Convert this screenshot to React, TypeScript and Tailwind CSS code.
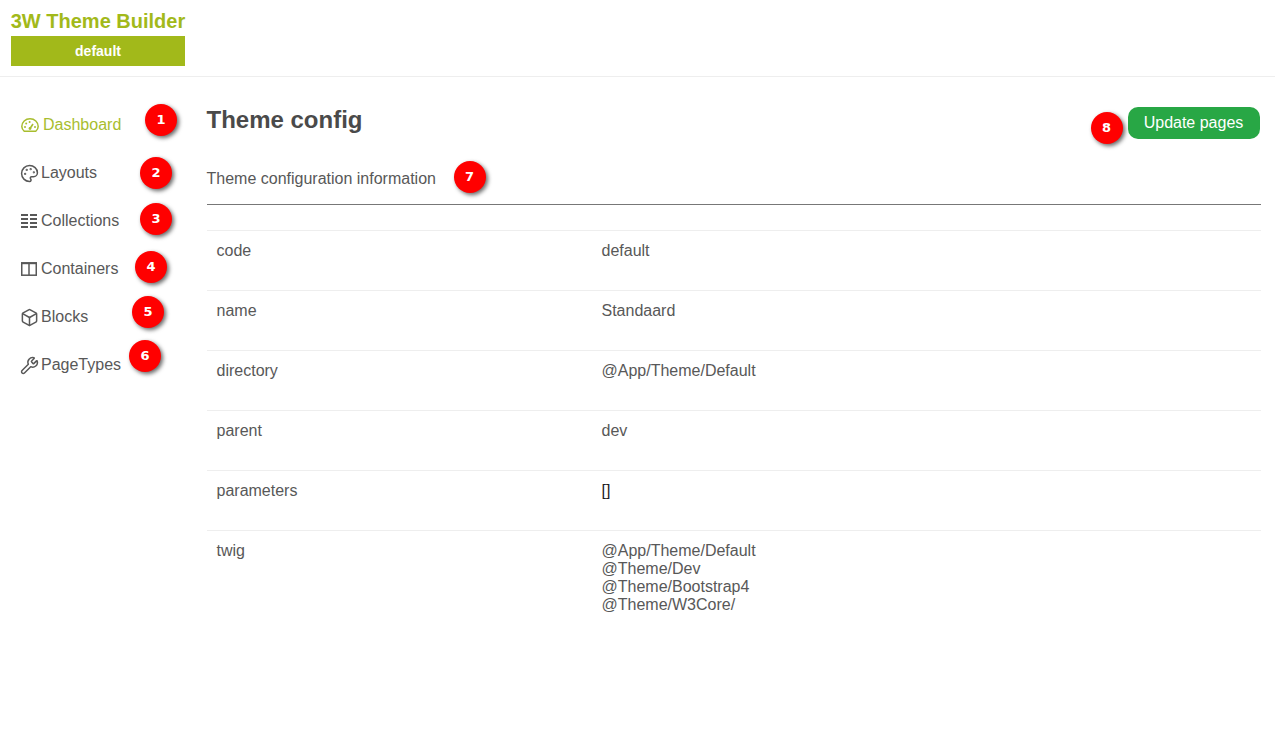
import React from "react";
import { Box, Palette, Wrench } from "lucide-react";

const rows = [
  { key: "code", value: ["default"] },
  { key: "name", value: ["Standaard"] },
  { key: "directory", value: ["@App/Theme/Default"] },
  { key: "parent", value: ["dev"] },
  { key: "parameters", value: ["[]"] },
  { key: "twig", value: ["@App/Theme/Default", "@Theme/Dev", "@Theme/Bootstrap4", "@Theme/W3Core/"] },
];

function GaugeIcon() {
  return (
    <svg width="18" height="14" viewBox="0 0 18 14" className="shrink-0" fill="none" stroke="currentColor">
      <path d="M3.2 13.2C1.7 11.9.8 10.2.8 8.6.8 4.2 4.4.8 9 .8s8.2 3.4 8.2 7.8c0 1.6-.9 3.3-2.4 4.6Z" strokeWidth="1.5" />
      <path d="M9 10.5 12 6" strokeWidth="1.6" />
      <circle cx="9" cy="10.5" r="1.4" fill="currentColor" stroke="none" />
      <circle cx="4" cy="9" r="1" fill="currentColor" stroke="none" />
      <circle cx="5.2" cy="5.6" r="1" fill="currentColor" stroke="none" />
      <circle cx="8.6" cy="4" r="1" fill="currentColor" stroke="none" />
      <circle cx="14" cy="9" r="1" fill="currentColor" stroke="none" />
    </svg>
  );
}

function ListIcon() {
  return (
    <svg width="16" height="15" viewBox="0 0 16 15" className="shrink-0" fill="currentColor">
      <rect x="0" y="0" width="7" height="2" />
      <rect x="9" y="0" width="7" height="2" />
      <rect x="0" y="4" width="7" height="2" />
      <rect x="9" y="4" width="7" height="2" />
      <rect x="0" y="8" width="7" height="2" />
      <rect x="9" y="8" width="7" height="2" />
      <rect x="0" y="12" width="7" height="2" />
      <rect x="9" y="12" width="7" height="2" />
    </svg>
  );
}

function ColumnsIcon() {
  return (
    <svg width="16" height="14" viewBox="0 0 16 14" className="shrink-0" fill="none" stroke="currentColor" strokeWidth="1.5">
      <rect x="0.75" y="1" width="14.5" height="12.2" />
      <path d="M8 1v12" />
      <path d="M0 1.2h16" strokeWidth="2" />
    </svg>
  );
}

function LucideBox({ children }: { children: React.ReactNode }) {
  return <span className="flex h-[16px] w-[16px] shrink-0 items-center justify-center">{children}</span>;
}

const nav = [
  { label: "Dashboard", icon: <GaugeIcon />, badge: 1, badgeClass: "left-[124px] top-[3px]", active: true },
  { label: "Layouts", icon: <LucideBox><Palette size={19} strokeWidth={1.9} className="shrink-0" /></LucideBox>, badge: 2, badgeClass: "left-[119px] top-[8px]" },
  { label: "Collections", icon: <ListIcon />, badge: 3, badgeClass: "left-[119px] top-[6px]" },
  { label: "Containers", icon: <ColumnsIcon />, badge: 4, badgeClass: "left-[114px] top-[6px]" },
  { label: "Blocks", icon: <LucideBox><Box size={19} strokeWidth={1.9} className="shrink-0" /></LucideBox>, badge: 5, badgeClass: "left-[111px] top-[3px]" },
  { label: "PageTypes", icon: <LucideBox><Wrench size={19} strokeWidth={1.9} className="shrink-0" /></LucideBox>, badge: 6, badgeClass: "left-[108px] top-[-1px]" },
];

function Badge({ n, className }: { n: number; className: string }) {
  return (
    <span
      className={`absolute flex h-[32px] w-[32px] items-center justify-center rounded-full bg-[#ff0000] text-[13px] font-bold text-white shadow-[2px_2px_4px_rgba(0,0,0,0.6)] [font-family:'DejaVu_Sans',sans-serif] ${className}`}
    >
      {n}
    </span>
  );
}

export default function App() {
  return (
    <div className="min-h-[742px] bg-white text-[16px] leading-[18px] text-[#585858] [font-family:'Liberation_Sans',Arial,sans-serif]">
      {/* Header */}
      <div className="h-[77px] border-b border-[#eeeeee] pl-[10px] pt-[10px]">
        <div className="w-[176px]">
          <div className="text-center text-[20px] font-bold leading-[23px] whitespace-nowrap text-[#a2b91a]">3W Theme Builder</div>
          <div className="ml-[1px] mt-[3px] flex h-[30px] w-[174px] items-center justify-center bg-[#a2b91a] text-[14px] font-bold text-white">
            default
          </div>
        </div>
      </div>

      <div className="flex">
        {/* Sidebar */}
        <div className="w-[206.5px] shrink-0 pl-[21px] pt-[24px]">
          {nav.map((item) => (
            <div
              key={item.label}
              className={`relative flex h-[48px] items-center gap-[4px] ${item.active ? "text-[#a8bd2e]" : "text-[#585858]"}`}
            >
              {item.icon}
              <span>{item.label}</span>
              <Badge n={item.badge} className={item.badgeClass} />
            </div>
          ))}
        </div>

        {/* Main */}
        <div className="w-[1054px] pt-[30px]">
          <div className="relative flex items-start justify-between">
            <h1 className="text-[24px] font-bold leading-[26px] text-[#4a4a4a]">Theme config</h1>
            <div className="relative mr-[1px]">
              <Badge n={8} className="left-[-37px] top-[5px]" />
              <button className="h-[32px] w-[132px] rounded-[10px] bg-[#28a745] text-[16px] text-white">Update pages</button>
            </div>
          </div>

          <div className="relative mt-[28px] h-[38px] border-b border-[#777] pt-[3px]">
            Theme configuration information
            <Badge n={7} className="left-[247px] top-[-6px]" />
          </div>

          <div className="mt-[25px]">
            {rows.map((row) => (
              <div key={row.key} className="flex min-h-[60px] border-t border-[#eeeeee] pb-[30px] pl-[10px] pt-[11px] last:pb-0">
                <div className="w-[385px]">{row.key}</div>
                <div>
                  {row.value.map((v) => (
                    <div key={v} className={v === "[]" ? "text-[#222]" : ""}>{v}</div>
                  ))}
                </div>
              </div>
            ))}
          </div>
        </div>
      </div>
    </div>
  );
}
